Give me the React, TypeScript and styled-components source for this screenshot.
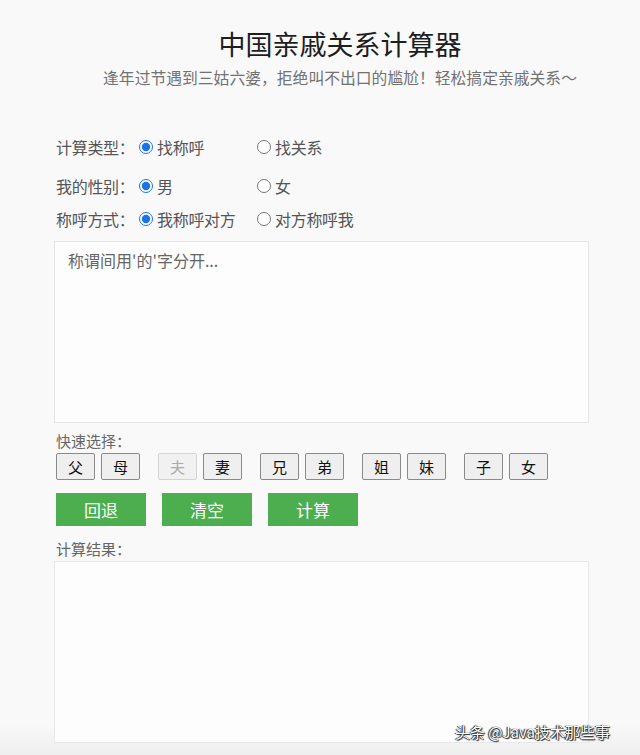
import React from "react";
import styled, { createGlobalStyle } from "styled-components";

const Global = createGlobalStyle`
  html, body { margin: 0; padding: 0; background: #f8f8f9; }
  body { font-family: "Noto Sans CJK SC", "Noto Sans", sans-serif; }
  * { box-sizing: border-box; }
`;

const Page = styled.div`
  position: relative;
  width: 640px;
  height: 755px;
  overflow: hidden;
  padding: 26px 0 0 0;
  background: linear-gradient(#f9f9fa 0%, #f9f9fa 96%, #eeeeef 100%);
`;

const Header = styled.header`
  padding: 0 14px 0 54px;
  text-align: center;
`;

const Title = styled.h1`
  margin: 0;
  font-size: 27px;
  line-height: 36px;
  font-weight: 400;
  color: #1e1e1e;
`;

const Subtitle = styled.p`
  margin: 5px 0 0;
  font-size: 15.8px;
  line-height: 22px;
  color: #727272;
`;

const Form = styled.div`
  padding-left: 54px;
  width: 590px;
`;

const Row = styled.div<{ $mt: number }>`
  display: flex;
  align-items: center;
  height: 24px;
  margin-top: ${(p) => p.$mt}px;
  padding-left: 2px;
`;

const Label = styled.span`
  font-size: 16px;
  color: #555;
  width: 84px;
  letter-spacing: -0.3px;
`;

const Option = styled.label`
  display: flex;
  align-items: center;
  width: 118px;
  font-size: 16px;
  color: #555;
  letter-spacing: -0.3px;
  input {
    margin: 0 4px 0 -1px;
    width: 14px;
    height: 14px;
    accent-color: #1a73e8;
  }
`;

const Area = styled.textarea<{ $mt: number }>`
  display: block;
  width: 535px;
  height: 182px;
  margin-top: ${(p) => p.$mt}px;
  padding: 6px 13px;
  border: 1px solid #e6e6e8;
  background: #fdfdfd;
  font-family: "Noto Sans CJK SC", "Noto Sans", sans-serif;
  font-size: 16px;
  line-height: 24px;
  resize: none;
  outline: none;
  &::placeholder { color: #666; }
`;

const Caption = styled.div<{ $mt: number }>`
  margin-top: ${(p) => p.$mt}px;
  padding-left: 2px;
  font-size: 15px;
  line-height: 20px;
  color: #666;
`;

const Quick = styled.div`
  display: flex;
  gap: 18px;
  margin-top: 2px;
  padding-left: 2px;
`;

const Pair = styled.div`
  display: flex;
  gap: 6px;
`;

const QBtn = styled.button`
  width: 39px;
  height: 27px;
  padding: 0;
  border: 1px solid #8a8a8a;
  border-radius: 2px;
  background: #efefef;
  font-family: "Noto Sans CJK SC", sans-serif;
  font-size: 15px;
  color: #111;
  &:disabled {
    border-color: #d4d4d4;
    background: #f1f1f1;
    color: #aaa;
  }
`;

const Actions = styled.div`
  display: flex;
  gap: 16px;
  margin-top: 13px;
  padding-left: 2px;
`;

const GBtn = styled.button`
  width: 90px;
  height: 33px;
  border: none;
  background: #4cae4f;
  color: #fff;
  font-family: "Noto Sans CJK SC", sans-serif;
  font-size: 17px;
  padding: 0;
`;

const Result = styled.div`
  width: 535px;
  height: 182px;
  margin-top: 2px;
  border: 1px solid #e8e8ea;
  background: #fdfdfd;
`;

const Watermark = styled.div`
  position: absolute;
  left: 455px;
  top: 720px;
  font-family: "Noto Sans CJK SC", sans-serif;
  font-size: 15px;
  line-height: 24px;
  color: #fff;
  text-shadow: 0 0 1px #000, 1px 1px 1px #222, -1px 0 1px #222;
  white-space: nowrap;
`;

const groups: [string, string][] = [
  ["父", "母"],
  ["夫", "妻"],
  ["兄", "弟"],
  ["姐", "妹"],
  ["子", "女"],
];

export default function App() {
  return (
    <Page>
      <Global />
      <Header>
        <Title>中国亲戚关系计算器</Title>
        <Subtitle>逢年过节遇到三姑六婆，拒绝叫不出口的尴尬！轻松搞定亲戚关系～</Subtitle>
      </Header>
      <Form>
        <Row $mt={46}>
          <Label>计算类型：</Label>
          <Option><input type="radio" name="t" defaultChecked />找称呼</Option>
          <Option><input type="radio" name="t" />找关系</Option>
        </Row>
        <Row $mt={15}>
          <Label>我的性别：</Label>
          <Option><input type="radio" name="s" defaultChecked />男</Option>
          <Option><input type="radio" name="s" />女</Option>
        </Row>
        <Row $mt={9}>
          <Label>称呼方式：</Label>
          <Option><input type="radio" name="m" defaultChecked />我称呼对方</Option>
          <Option><input type="radio" name="m" />对方称呼我</Option>
        </Row>
        <Area $mt={10} placeholder="称谓间用'的'字分开..." />
        <Caption $mt={8}>快速选择：</Caption>
        <Quick>
          {groups.map(([a, b]) => (
            <Pair key={a}>
              <QBtn disabled={a === "夫"}>{a}</QBtn>
              <QBtn>{b}</QBtn>
            </Pair>
          ))}
        </Quick>
        <Actions>
          <GBtn>回退</GBtn>
          <GBtn>清空</GBtn>
          <GBtn>计算</GBtn>
        </Actions>
        <Caption $mt={13}>计算结果：</Caption>
        <Result />
      </Form>
      <Watermark>头条 @Java技术那些事</Watermark>
    </Page>
  );
}
